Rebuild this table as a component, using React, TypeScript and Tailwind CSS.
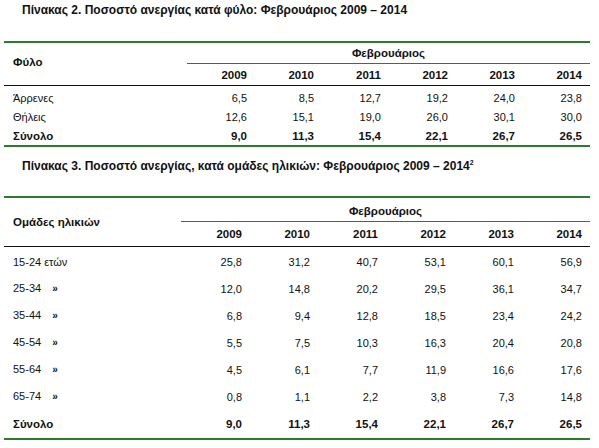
const years = ['2009', '2010', '2011', '2012', '2013', '2014']

const genderRows = [
  { label: 'Άρρενες', values: ['6,5', '8,5', '12,7', '19,2', '24,0', '23,8'] },
  { label: 'Θήλεις', values: ['12,6', '15,1', '19,0', '26,0', '30,1', '30,0'] },
  { label: 'Σύνολο', values: ['9,0', '11,3', '15,4', '22,1', '26,7', '26,5'], total: true },
]

const ageRows = [
  { label: '15-24 ετών', values: ['25,8', '31,2', '40,7', '53,1', '60,1', '56,9'] },
  { label: '25-34', mark: true, values: ['12,0', '14,8', '20,2', '29,5', '36,1', '34,7'] },
  { label: '35-44', mark: true, values: ['6,8', '9,4', '12,8', '18,5', '23,4', '24,2'] },
  { label: '45-54', mark: true, values: ['5,5', '7,5', '10,3', '16,3', '20,4', '20,8'] },
  { label: '55-64', mark: true, values: ['4,5', '6,1', '7,7', '11,9', '16,6', '17,6'] },
  { label: '65-74', mark: true, values: ['0,8', '1,1', '2,2', '3,8', '7,3', '14,8'] },
  { label: 'Σύνολο', values: ['9,0', '11,3', '15,4', '22,1', '26,7', '26,5'], total: true },
]

type Row = { label: string; values: string[]; total?: boolean; mark?: boolean }

function Cells({ values, colW }: { values: string[]; colW: string }) {
  return (
    <>
      {values.map((v, i) => (
        <div key={i} className={`${colW} shrink-0 pr-[7px] text-right`}>
          {v}
        </div>
      ))}
    </>
  )
}

function DataTable({
  labelTitle,
  labelW,
  colW,
  headH,
  labelPt,
  rows,
  rowH,
  bodyPt,
}: {
  labelTitle: string
  labelW: string
  colW: string
  headH: string
  labelPt: string
  rows: Row[]
  rowH: string
  bodyPt: string
}) {
  return (
    <div className="ml-[4px] w-[586px] border-t-2 border-b-2 border-[#2e7b30]">
      {/* header */}
      <div className="flex border-b border-[#111] text-[11.5px] font-bold">
        <div className={`${labelW} shrink-0 pl-[9px] ${labelPt}`}>{labelTitle}</div>
        <div className="flex-1">
          <div className={`${headH} flex items-end justify-center pb-[3px] border-b border-[#2e7b30]`}>
            Φεβρουάριος
          </div>
          <div className={`${headH} flex items-center`}>
            <Cells values={years} colW={colW} />
          </div>
        </div>
      </div>
      {/* body */}
      <div className={bodyPt}>
        {rows.map((r) => (
          <div
            key={r.label}
            className={`${rowH} flex items-center ${r.total ? 'font-bold text-[11.5px]' : ''}`}
          >
            <div className={`${labelW} shrink-0 pl-[9px]`}>
              {r.label}
              {r.mark && <span className="ml-[11px] text-[10px] font-bold">»</span>}
            </div>
            <Cells values={r.values} colW={colW} />
          </div>
        ))}
      </div>
    </div>
  )
}

export default function App() {
  return (
    <div className="w-[599px] h-[448px] bg-white text-[#111] text-[11px] leading-[14px] font-['Liberation_Sans',Arial,sans-serif] overflow-hidden">
      <div className="pt-[3px] pl-[22px] text-[12px] font-bold">
        Πίνακας 2. Ποσοστό ανεργίας κατά φύλο: Φεβρουάριος 2009 – 2014
      </div>
      <div className="mt-[24px]">
        <DataTable
          labelTitle="Φύλο"
          labelW="w-[183px]"
          colW="w-[67px]"
          headH="h-[21px]"
          labelPt="pt-[12px]"
          rows={genderRows}
          rowH="h-[19px]"
          bodyPt="pt-[2px]"
        />
      </div>
      <div className="mt-[12px] pl-[22px] text-[12px] font-bold">
        Πίνακας 3. Ποσοστό ανεργίας, κατά ομάδες ηλικιών: Φεβρουάριος 2009 – 2014
        <sup className="text-[7px] relative -top-[5px]">2</sup>
      </div>
      <div className="mt-[23px]">
        <DataTable
          labelTitle="Ομάδες ηλικιών"
          labelW="w-[177px]"
          colW="w-[68px]"
          headH="h-[24px]"
          labelPt="pt-[17px]"
          rows={ageRows}
          rowH="h-[27px]"
          bodyPt="pt-[1px] pb-[1px]"
        />
      </div>
    </div>
  )
}
